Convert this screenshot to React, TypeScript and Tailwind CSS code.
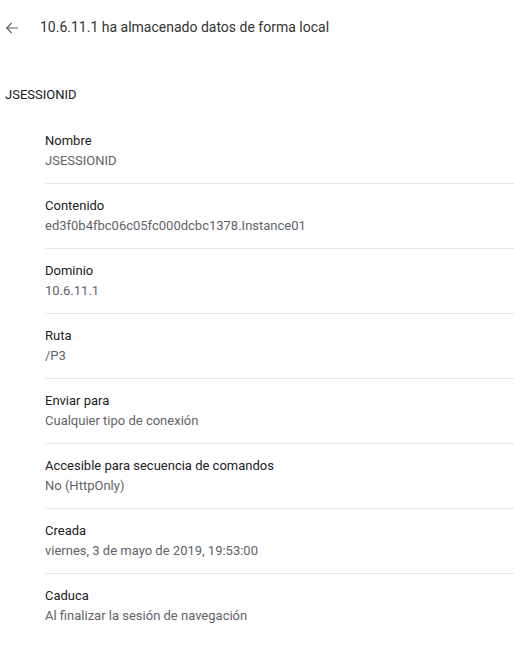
const rows = [
  { label: "Nombre", value: "JSESSIONID" },
  { label: "Contenido", value: "ed3f0b4fbc06c05fc000dcbc1378.Instance01" },
  { label: "Dominio", value: "10.6.11.1" },
  { label: "Ruta", value: "/P3" },
  { label: "Enviar para", value: "Cualquier tipo de conexión" },
  { label: "Accesible para secuencia de comandos", value: "No (HttpOnly)" },
  { label: "Creada", value: "viernes, 3 de mayo de 2019, 19:53:00" },
  { label: "Caduca", value: "Al finalizar la sesión de navegación" },
];

export default function App() {
  return (
    <div className="min-h-screen bg-white font-['Roboto',sans-serif]">
      {/* Header */}
      <div className="flex items-center h-[55px] pl-[4px]">
        <svg className="w-[16px] h-[16px] text-[#5f6368]" viewBox="0 0 24 24" fill="none" stroke="currentColor" strokeWidth={1.8}>
          <path d="M21 12H4M11.5 4.5L4 12l7.5 7.5" />
        </svg>
        <h1 className="ml-[20px] text-[14px] text-[#333]">10.6.11.1 ha almacenado datos de forma local</h1>
      </div>

      <div className="pt-[30px] pl-[5px] text-[13px] text-[#202124] leading-[20px]">JSESSIONID</div>

      <div className="pl-[45px] pt-[14px]">
        {rows.map((r, i) => (
          <div
            key={r.label}
            className={`pt-[12px] pb-[12px] ${i < rows.length - 1 ? "border-b border-[#e8e8e8]" : ""}`}
          >
            <div className="text-[13px] leading-[20px] text-[#202124]">{r.label}</div>
            <div className="text-[13px] leading-[20px] text-[#5f6368]">{r.value}</div>
          </div>
        ))}
      </div>
    </div>
  );
}
